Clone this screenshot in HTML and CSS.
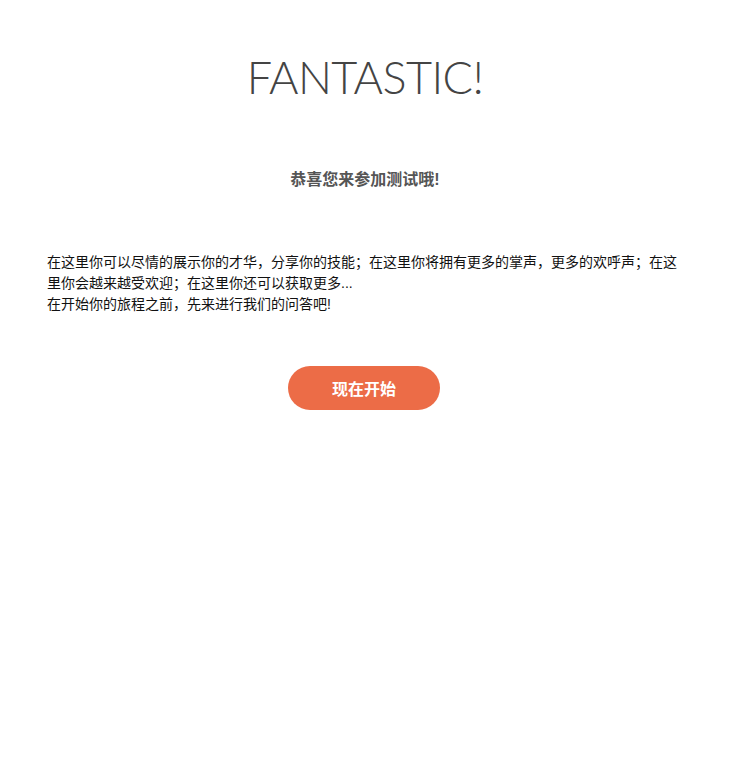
FILE: index.html
```html
<!DOCTYPE html>
<html lang="zh">
<head>
<meta charset="utf-8">
<title>Fantastic</title>
<link rel="stylesheet" href="styles.css">
</head>
<body>
<main class="page">
  <h1 class="title">FANTASTIC!</h1>
  <h2 class="subtitle">恭喜您来参加测试哦!</h2>
  <div class="intro">
    <p>在这里你可以尽情的展示你的才华，分享你的技能；在这里你将拥有更多的掌声，更多的欢呼声；在这里你会越来越受欢迎；在这里你还可以获取更多...</p>
    <p>在开始你的旅程之前，先来进行我们的问答吧!</p>
  </div>
  <div class="actions">
    <button class="start">现在开始</button>
  </div>
</main>
</body>
</html>
```
FILE: styles.css
```css
html, body {
  margin: 0;
  padding: 0;
  background: #fff;
}
body {
  font-family: "Liberation Sans", "Noto Sans CJK SC", sans-serif;
  color: #222;
}
.page {
  padding: 50px 47px 0;
  display: flex;
  flex-direction: column;
}
.title {
  margin: 0;
  text-align: center;
  font-family: Lato, "Liberation Sans", sans-serif;
  font-weight: 300;
  font-size: 45px;
  line-height: 54px;
  color: #444;
  letter-spacing: -0.6px;
}
.subtitle {
  margin: 64px 0 0;
  text-align: center;
  font-size: 16px;
  line-height: 24px;
  font-weight: bold;
  color: #555;
}
.intro {
  margin-top: 60px;
  font-size: 14px;
  line-height: 21px;
  color: #111;
}
.intro p {
  margin: 0;
}
.actions {
  margin-top: 51px;
  display: flex;
  justify-content: center;
}
.start {
  width: 152px;
  height: 44px;
  margin-right: 2px;
  border: none;
  border-radius: 22px;
  background: #ec6c47;
  color: #fff;
  font-family: "Liberation Sans", "Noto Sans CJK SC", sans-serif;
  font-size: 16px;
  font-weight: bold;
  cursor: pointer;
}
```
